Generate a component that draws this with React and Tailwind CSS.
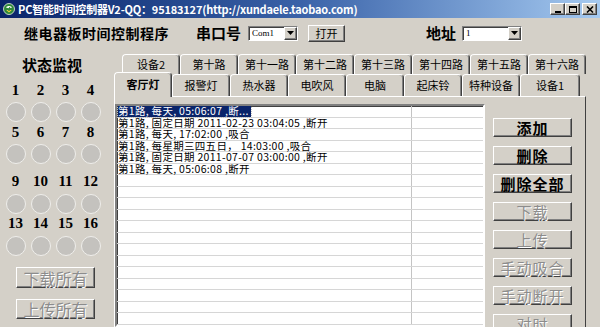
import React from 'react';

const raised = 'border border-t-white border-l-white border-r-[#404040] border-b-[#404040] shadow-[inset_-1px_-1px_0_#808080]';
const grayed = 'text-[#8c8c8c] [text-shadow:1px_1px_0_#ffffff]';
const cjk = "font-['Noto_Sans_CJK_SC','Liberation_Sans',sans-serif]";

const backTabs = ['设备2', '第十路', '第十一路', '第十二路', '第十三路', '第十四路', '第十五路', '第十六路'];
const frontTabs = ['客厅灯', '报警灯', '热水器', '电吹风', '电脑', '起床铃', '特种设备', '设备1'];

const rows = [
  '第1路, 每天, 05:06:07 ,断...',
  '第1路, 固定日期 2011-02-23 03:04:05 ,断开',
  '第1路, 每天, 17:02:00 ,吸合',
  '第1路, 每星期三四五日， 14:03:00 ,吸合',
  '第1路, 固定日期 2011-07-07 03:00:00 ,断开',
  '第1路, 每天, 05:06:08 ,断开',
];

const rightButtons = [
  { label: '添加', on: true },
  { label: '删除', on: true },
  { label: '删除全部', on: true },
  { label: '下载', on: false },
  { label: '上传', on: false },
  { label: '手动吸合', on: false },
  { label: '手动断开', on: false },
  { label: '对时', on: false },
];

function AppIcon() {
  return (
    <svg width="12" height="12" viewBox="0 0 12 12">
      <circle cx="6" cy="6" r="5.5" fill="#2f8a3a" stroke="#e8f0e0" strokeWidth="0.8" />
      <path d="M3 4.5 C4 2.5 8 2.5 9 4.5 L7.5 5 L6.5 3.8 L5.5 5.2 Z" fill="#ffffff" />
      <path d="M3.2 7 L6 9.5 L8.8 7 L7.2 7 L6 8.2 L4.8 7 Z" fill="#f4d23c" />
    </svg>
  );
}

function WinButton({ children, className = '' }) {
  return (
    <div className={`w-[15px] h-[12px] bg-[#d4d0c8] flex items-center justify-center ${raised} ${className}`}>
      {children}
    </div>
  );
}

function Combo({ value, width }) {
  return (
    <div className={`flex h-[15px] ${width} bg-white border border-t-[#808080] border-l-[#808080] border-b-white border-r-white shadow-[inset_1px_1px_0_#404040]`}>
      <div className="flex-1 flex items-center pl-[3px] text-[9px] leading-none font-['Liberation_Serif',serif] text-black">{value}</div>
      <div className={`w-[13px] h-full bg-[#d4d0c8] flex items-center justify-center ${raised}`}>
        <svg width="7" height="4" viewBox="0 0 7 4">
          <path d="M0 0 H7 L3.5 4 Z" fill="#000" />
        </svg>
      </div>
    </div>
  );
}

function NumRow({ nums, mt }) {
  return (
    <div className={`grid grid-cols-4 w-[100px] ml-[3px] h-[14px] ${mt}`}>
      {nums.map((n) => (
        <div key={n} className="flex items-center justify-center text-[15px] leading-none font-bold font-['Liberation_Serif',serif] text-black">
          {n}
        </div>
      ))}
    </div>
  );
}

function LampRow({ mt }) {
  return (
    <div className={`grid grid-cols-4 w-[100px] ml-[3px] h-[20px] ${mt}`}>
      {[0, 1, 2, 3].map((i) => (
        <div key={i} className="flex justify-center">
          <div className="w-[20px] h-[20px] rounded-full bg-[#c4c2be] border border-[#efeeeb]" />
        </div>
      ))}
    </div>
  );
}

export default function App() {
  return (
    <div className={`w-[600px] h-[327px] overflow-hidden bg-[#d4d0c8] flex flex-col ${cjk}`}>
      {/* Title bar */}
      <div className="h-[18px] shrink-0 flex items-center pl-[3px] pr-[3px] bg-linear-to-r from-[#0a246a] via-[#3a62a8] to-[#a6caf0]">
        <AppIcon />
        <span className="ml-[3px] text-[11px] leading-none font-bold text-white tracking-[-0.2px] whitespace-nowrap">
          PC智能时间控制器V2-QQ：95183127(http://xundaele.taobao.com)
        </span>
        <div className="ml-auto flex items-center">
          <WinButton>
            <div className="w-[6px] h-[2px] bg-black mt-[5px]" />
          </WinButton>
          <WinButton>
            <div className="w-[8px] h-[7px] border border-black border-t-2" />
          </WinButton>
          <WinButton className="ml-[2px]">
            <svg width="8" height="7" viewBox="0 0 8 7">
              <path d="M1 0.5 L7 6.5 M7 0.5 L1 6.5" stroke="#000" strokeWidth="1.6" />
            </svg>
          </WinButton>
        </div>
      </div>

      {/* Toolbar */}
      <div className="h-[30px] shrink-0 flex items-center text-black">
        <span className="w-[196px] pl-[24px] text-[14px] font-bold tracking-[0.5px] whitespace-nowrap">继电器板时间控制程序</span>
        <span className="w-[52px] text-[15px] font-bold whitespace-nowrap">串口号</span>
        <Combo value="Com1" width="w-[50px]" />
        <div className={`ml-[10px] w-[37px] h-[17px] flex items-center justify-center text-[11px] leading-none bg-[#d4d0c8] ${raised}`}>打开</div>
        <span className="ml-[81px] w-[36px] text-[15px] font-bold whitespace-nowrap">地址</span>
        <Combo value="1" width="w-[60px]" />
      </div>

      {/* Body */}
      <div className="flex-1 flex min-h-0">
        {/* Left status panel */}
        <div className="w-[114px] shrink-0 flex flex-col">
          <div className="mt-[8px] h-[18px] pl-[22px] text-[15px] font-bold leading-[18px] text-black">状态监视</div>
          <NumRow nums={[1, 2, 3, 4]} mt="mt-[9px]" />
          <LampRow mt="mt-[5px]" />
          <NumRow nums={[5, 6, 7, 8]} mt="mt-[3px]" />
          <LampRow mt="mt-[5px]" />
          <NumRow nums={[9, 10, 11, 12]} mt="mt-[10px]" />
          <LampRow mt="mt-[6px]" />
          <NumRow nums={[13, 14, 15, 16]} mt="mt-[2px]" />
          <LampRow mt="mt-[6px]" />
          <div className={`mt-[11px] ml-[16px] w-[79px] h-[21px] flex items-center justify-center text-[16px] leading-none ${grayed} ${raised}`}>下载所有</div>
          <div className={`mt-[11px] ml-[16px] w-[79px] h-[20px] flex items-center justify-center text-[16px] leading-none ${grayed} ${raised}`}>上传所有</div>
        </div>

        {/* Tabs and pane */}
        <div className="w-[472px] shrink-0 flex flex-col">
          <div className="mt-[6px] ml-[8px] h-[20px] flex">
            {backTabs.map((t) => (
              <div
                key={t}
                className="w-[58px] h-[20px] flex items-center justify-center text-[11px] leading-none text-black border-t border-l border-r border-t-white border-l-white border-r-[#404040] rounded-t-[4px] shadow-[inset_-1px_0_0_#808080]"
              >
                {t}
              </div>
            ))}
          </div>
          <div className="h-[22px] flex items-start">
            {frontTabs.map((t, i) => (
              <div
                key={t}
                className={
                  i === 0
                    ? 'relative z-10 -mt-[2px] w-[58px] h-[25px] pb-[1px] flex items-center justify-center text-[11px] leading-none font-bold text-black bg-[#d4d0c8] border-t border-l border-r border-t-white border-l-white border-r-[#404040] rounded-t-[4px] shadow-[inset_-1px_0_0_#808080]'
                    : `${i === 7 ? 'w-[60px]' : 'w-[58px]'} h-[22px] flex items-center justify-center text-[11px] leading-none text-black border-t border-l border-r border-t-white border-l-white border-r-[#404040] rounded-t-[4px] shadow-[inset_-1px_0_0_#808080]`
                }
              >
                {t}
              </div>
            ))}
          </div>

          <div className="flex-1 flex min-h-0 border-t border-l border-r border-t-white border-l-white border-r-[#404040]">
            {/* List */}
            <div className="mt-[7px] w-[370px] shrink-0 bg-white border-2 border-t-[#808080] border-l-[#808080] border-r-white border-b-white shadow-[inset_1px_1px_0_#404040] overflow-hidden">
              {Array.from({ length: 22 }).map((_, i) => (
                <div key={i} className="h-[11.5px] flex border-b border-[#d6d6d6]">
                  <div className="w-[295px] shrink-0 border-r border-[#c4c4c4] pl-[1px] text-[10.5px] leading-[10.5px] tracking-[0.3px] whitespace-nowrap text-black">
                    {i === 0 ? (
                      <span className="inline-block bg-[#0a246a] text-white outline-1 outline-dotted outline-[#c0c0c0] pr-[2px]">{rows[0]}</span>
                    ) : (
                      rows[i] || ''
                    )}
                  </div>
                  <div className="flex-1" />
                </div>
              ))}
            </div>

            {/* Buttons */}
            <div className="ml-[8px] mt-[21px] flex flex-col gap-[9px]">
              {rightButtons.map((b) => (
                <div
                  key={b.label}
                  className={`w-[79px] h-[19px] shrink-0 flex items-center justify-center text-[15px] leading-none tracking-[1px] ${b.on ? 'font-bold text-black' : grayed} ${raised}`}
                >
                  {b.label}
                </div>
              ))}
            </div>
          </div>
        </div>
      </div>
    </div>
  );
}
